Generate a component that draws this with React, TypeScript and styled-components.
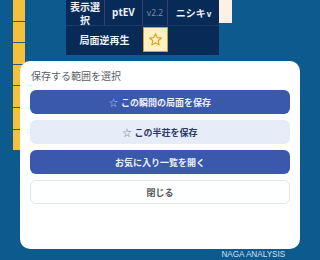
import React from "react";
import styled, { createGlobalStyle } from "styled-components";

const Global = createGlobalStyle`
  html, body { margin: 0; padding: 0; background: #0c5a8e; }
  body { font-family: "Noto Sans CJK JP", "Noto Sans", sans-serif; }
`;

const Page = styled.div`
  position: relative;
  width: 320px;
  height: 260px;
  overflow: hidden;
  background: #0c5a8e;
  display: flex;
  flex-direction: column;
`;

const TopArea = styled.div`
  display: flex;
  align-items: flex-start;
`;

const Strip = styled.div`
  margin-left: 13px;
  width: 12px;
  display: flex;
  flex-direction: column;
  gap: 1px;
  background: #2e5a72;
`;

const StripCell = styled.div`
  height: 20.6px;
  background: #f5c03a;
`;

const Table = styled.div`
  margin-left: 41px;
  width: 153px;
  background: #082a56;
  display: grid;
  grid-template-columns: 39px 38px 25px 51px;
  grid-template-rows: 26px 26px;
  padding-bottom: 3px;
`;

const Cell = styled.div<{ $span?: number; $sep?: boolean; $top?: boolean }>`
  grid-column: span ${(p) => p.$span ?? 1};
  display: flex;
  align-items: center;
  justify-content: center;
  text-align: center;
  color: #eef1f8;
  font-size: 10px;
  line-height: 13px;
  font-weight: 700;
  box-sizing: border-box;
  border-right: ${(p) => (p.$sep ? "1px solid #3a3a78" : "none")};
  border-bottom: ${(p) => (p.$top ? "1px solid #1c3a68" : "none")};
`;

const Version = styled.span`
  color: #7f89a6;
  font-size: 8.5px;
  font-weight: 400;
  font-family: "Noto Sans", sans-serif;
`;

const Latin = styled.span`
  font-family: "Noto Sans", sans-serif;
  font-size: 10px;
`;

const Caret = styled.span`
  font-size: 8px;
  font-weight: 700;
  margin-left: 1px;
  margin-top: 2px;
  font-family: "Noto Sans", sans-serif;
`;

const StarCell = styled.div`
  display: flex;
  align-items: center;
  justify-content: center;
  background: #fff2c0;
  border: 1px solid #c9a23c;
  box-sizing: border-box;
  margin: 1px 0 0 0;
`;

const Cream = styled.div`
  width: 13px;
  height: 23px;
  background: #fdf0e6;
`;

const Spacer = styled.div`
  flex: 1;
`;

const Footer = styled.div`
  align-self: flex-end;
  margin-right: 35px;
  margin-bottom: 1px;
  color: #d3e0ee;
  font-family: "Liberation Sans", sans-serif;
  font-size: 9.5px;
  line-height: 10px;
  transform: scaleX(0.86);
  transform-origin: right center;
`;

const Modal = styled.div`
  position: absolute;
  left: 20px;
  top: 61px;
  width: 280px;
  height: 188px;
  background: #ffffff;
  border-radius: 10px;
  box-sizing: border-box;
  padding: 8px 10px 0 10px;
  display: flex;
  flex-direction: column;
`;

const Title = styled.div`
  color: #5a5f68;
  font-size: 10px;
  line-height: 14px;
  padding-left: 1px;
  margin-bottom: 7px;
`;

const Buttons = styled.div`
  display: flex;
  flex-direction: column;
  gap: 6px;
`;

const Btn = styled.div<{ $variant: "primary" | "soft" | "plain" }>`
  height: 24px;
  border-radius: 6px;
  box-sizing: border-box;
  display: flex;
  align-items: center;
  justify-content: center;
  font-size: 9px;
  font-weight: 700;
  background: ${(p) =>
    p.$variant === "primary" ? "#3a59ad" : p.$variant === "soft" ? "#e6ecf8" : "#ffffff"};
  color: ${(p) =>
    p.$variant === "primary" ? "#eef1fa" : p.$variant === "soft" ? "#2c3a66" : "#50555e"};
  border: ${(p) => (p.$variant === "plain" ? "1px solid #e1e7ef" : "none")};
`;

const StarGlyph = styled.span`
  font-weight: 400;
  opacity: 0.7;
  margin-right: 3px;
`;

const Star = () => (
  <svg width="15" height="15" viewBox="0 0 24 24">
    <path
      d="M12 2.8l2.7 6.2 6.7.6-5.1 4.4 1.5 6.6L12 17.1l-5.8 3.5 1.5-6.6-5.1-4.4 6.7-.6z"
      fill="none"
      stroke="#e0a020"
      strokeWidth="1.8"
      strokeLinejoin="round"
    />
  </svg>
);

export default function App() {
  return (
    <>
      <Global />
      <Page>
        <TopArea>
          <Strip>
            {Array.from({ length: 7 }).map((_, i) => (
              <StripCell key={i} />
            ))}
          </Strip>
          <Table>
            <Cell $sep $top>表示選<br />択</Cell>
            <Cell $sep $top><Latin>ptEV</Latin></Cell>
            <Cell $sep $top><Version>v2.2</Version></Cell>
            <Cell $top>ニシキ<Caret>v</Caret></Cell>
            <Cell $span={2}>局面逆再生</Cell>
            <StarCell><Star /></StarCell>
            <Cell />
          </Table>
          <Cream />
        </TopArea>
        <Spacer />
        <Footer>NAGA ANALYSIS</Footer>
        <Modal>
          <Title>保存する範囲を選択</Title>
          <Buttons>
            <Btn $variant="primary"><StarGlyph>☆</StarGlyph>この瞬間の局面を保存</Btn>
            <Btn $variant="soft"><StarGlyph>☆</StarGlyph>この半荘を保存</Btn>
            <Btn $variant="primary">お気に入り一覧を開く</Btn>
            <Btn $variant="plain">閉じる</Btn>
          </Buttons>
        </Modal>
      </Page>
    </>
  );
}
